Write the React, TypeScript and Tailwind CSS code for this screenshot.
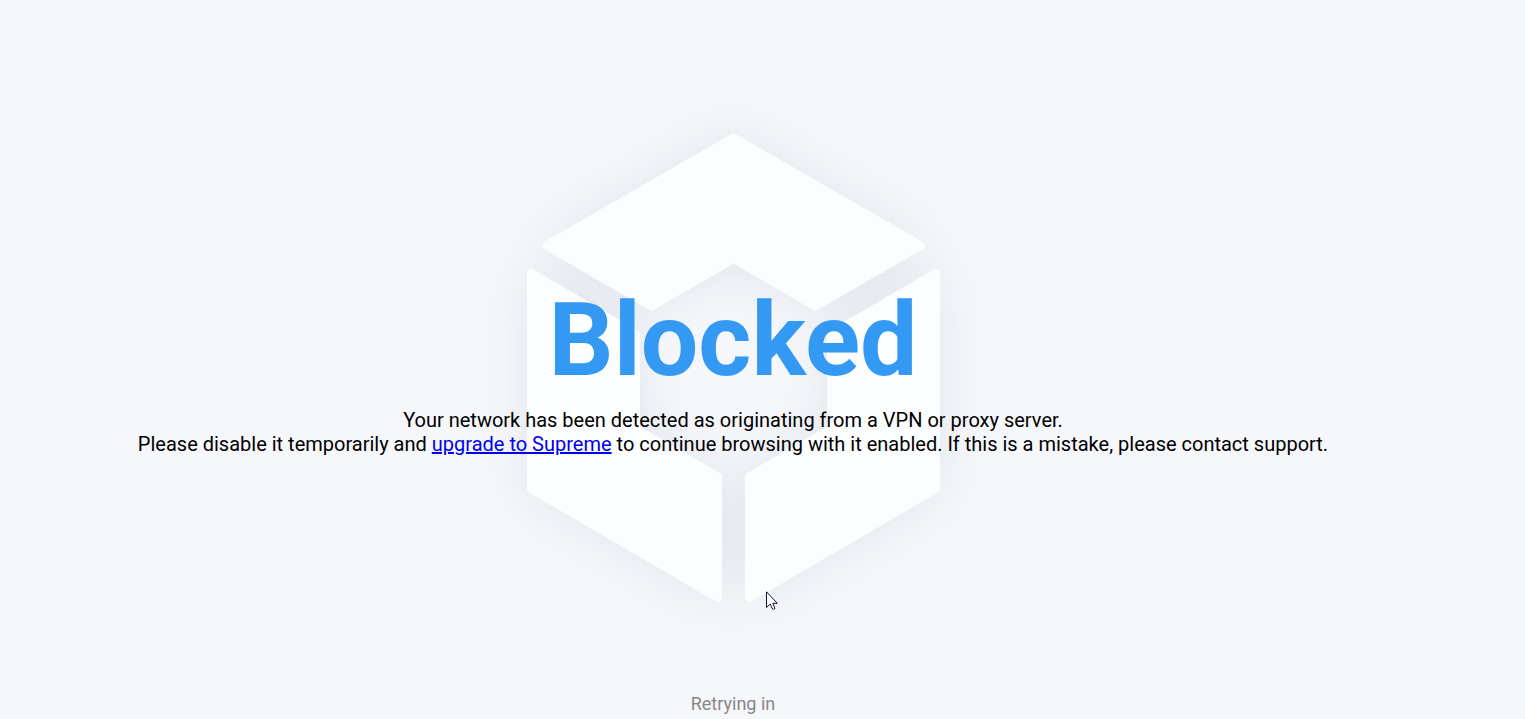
const FACES = [
  "M267.500 65.500 L455 173.500 L349.500 234.500 L267.500 187 L185.500 234.500 L80 173.500 Z",
  "M65 201 L170 262 V357 L252 404.500 V526 L65 417 Z",
  "M470 201 L365 262 V357 L283 404.500 V526 L470 417 Z",
];

function CubeLogo() {
  return (
    <svg
      viewBox="0 0 534 592"
      className="col-start-1 row-start-1 h-[592px] w-[534px] max-w-none overflow-visible"
      strokeWidth="8"
      strokeLinejoin="round"
      aria-hidden="true"
    >
      <defs>
        <filter
          id="cube-shadow"
          x="-40"
          y="-40"
          width="614"
          height="672"
          filterUnits="userSpaceOnUse"
          colorInterpolationFilters="sRGB"
        >
          <feGaussianBlur stdDeviation="25" />
        </filter>
      </defs>
      <g opacity="0.16">
        <g filter="url(#cube-shadow)" fill="#6b869e" stroke="#6b869e">
          {FACES.map((d) => (
            <path key={d} d={d} />
          ))}
        </g>
      </g>
      <g fill="#fcfdfe" stroke="#fcfdfe">
        {FACES.map((d) => (
          <path key={d} d={d} />
        ))}
      </g>
    </svg>
  );
}

function Pointer() {
  return (
    <svg
      viewBox="0 0 12 19"
      className="pointer-events-none absolute top-[591px] left-[766px] h-[19px] w-[12px]"
      aria-hidden="true"
    >
      <path
        d="M0.500 0.800 V16.500 L4.200 13 L6.500 18 Q7.500 18.800 9 17.600 L6.800 12.300 H11.300 Z"
        fill="#fff"
        stroke="#15152a"
        strokeWidth="1"
      />
    </svg>
  );
}

export default function App() {
  return (
    <div className="relative min-h-screen overflow-hidden bg-[#f6f7fb] pr-[59px] font-['Roboto',sans-serif] text-black">
      <main className="grid grid-cols-1 justify-items-center pt-[72px]">
        <CubeLogo />
        <div className="z-10 col-start-1 row-start-1 flex flex-col items-center pt-[208px] text-center">
          <h1 className="text-[102px] leading-[120px] font-bold text-[#3399f3]">Blocked</h1>
          <p className="mt-2 text-[20px] leading-6">
            Your network has been detected as originating from a VPN or proxy server.
            <br />
            Please disable it temporarily and{" "}
            <a href="#upgrade" className="text-[#0000ee] underline">
              upgrade to Supreme
            </a>{" "}
            to continue browsing with it enabled. If this is a mistake, please contact support.
          </p>
        </div>
      </main>
      <p className="mt-7 text-center text-lg leading-6 text-[#888888]">Retrying in</p>
      <Pointer />
    </div>
  );
}
